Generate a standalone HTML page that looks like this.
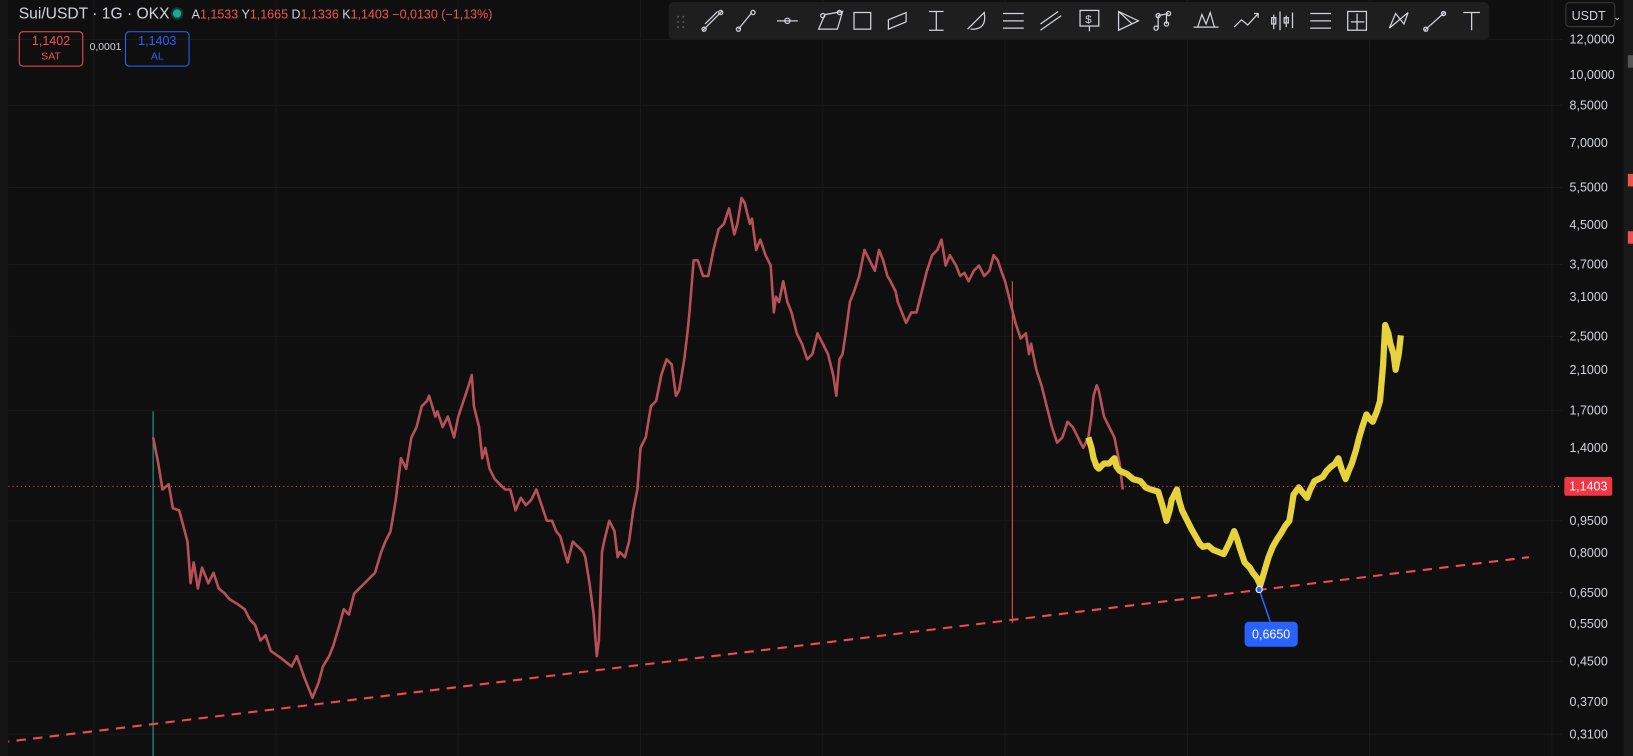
<!DOCTYPE html><html><head><meta charset="utf-8"><style>
body{margin:0;width:1633px;height:756px;background:#0f0f0f;overflow:hidden;font-family:"Liberation Sans",sans-serif;position:relative}
#w{position:absolute;left:0;top:0;width:1568px;height:726px;transform:scale(1.0415);transform-origin:0 0}
.t{position:absolute;white-space:nowrap}
.ax{position:absolute;left:1507px;color:#d1d4dc;font-size:12px}
.tb{position:absolute;left:642px;top:2px;width:788px;height:36px;background:#1e1e1e;border-radius:5px}
.tb svg{position:absolute;top:7px}
</style></head><body><div id="w">
<svg width="1568" height="726" style="position:absolute;left:0;top:0">
<g stroke="#1a1a1a" stroke-width="1">
<path d="M90 0V726M265 0V726M440 0V726M615 0V726M790 0V726M965 0V726M1140 0V726M1315 0V726M1490 0V726"/>
<path d="M0 38H1500M0 101H1500M0 180H1500M0 254H1500M0 323H1500M0 394H1500M0 500H1500M0 569H1500M0 635H1500M0 705H1500"/>
</g>
<line x1="147" y1="395" x2="147" y2="726" stroke="#26a69a" stroke-width="1"/>
<line x1="972" y1="270" x2="972" y2="598" stroke="#ef5350" stroke-width="1"/>
<polyline fill="none" stroke="#b8505a" stroke-width="2.5" stroke-linejoin="round" points="147,420 152,445 156,470 162,465 166,488 172,490 176,505 180,520 183,560 186,540 190,565 194,545 200,560 205,550 210,565 216,570 220,575 228,580 235,585 240,595 245,600 250,615 255,610 260,625 270,632 280,640 285,630 292,650 296,660 300,670 306,655 310,640 316,630 320,620 326,600 330,585 335,590 340,570 345,565 350,560 355,555 360,550 366,530 370,520 375,510 380,480 385,440 390,450 395,420 400,410 405,390 410,385 412,380 418,400 420,395 425,410 430,400 436,420 440,400 445,385 450,370 453,360 455,390 460,410 463,440 466,430 470,450 475,460 480,465 485,470 490,470 495,490 500,478 505,485 510,480 515,470 520,485 525,500 530,500 534,510 538,515 542,530 545,540 550,520 555,525 560,530 562,535 566,560 570,590 573,630 575,615 578,530 580,520 585,500 590,510 593,535 595,530 600,535 604,520 608,490 612,470 615,430 620,420 625,390 630,385 635,360 640,345 645,350 649,380 652,375 657,345 660,320 662,300 666,250 670,250 675,265 680,265 685,240 690,220 695,215 700,200 705,225 708,215 712,190 715,195 720,215 722,210 726,240 730,230 735,245 740,255 743,300 745,285 748,290 752,270 756,290 760,300 765,320 770,330 775,345 780,340 785,320 790,330 795,340 800,360 803,380 806,345 809,340 812,320 816,290 820,280 825,265 830,240 835,250 840,260 844,240 848,250 852,265 855,270 860,280 862,290 866,300 870,310 875,300 880,300 885,280 890,260 895,245 900,240 904,230 908,255 912,245 915,250 918,255 922,265 926,262 930,270 935,260 940,255 945,265 950,260 954,245 958,250 962,262 965,270 970,290 975,310 980,325 985,320 988,340 990,330 995,355 1000,370 1005,390 1010,410 1015,425 1020,420 1025,405 1030,410 1035,420 1040,430 1045,420 1048,400 1050,380 1053,370 1055,375 1058,390 1060,400 1065,410 1070,420 1075,445 1078,470"/>
<polyline fill="none" stroke="#e6d23a" stroke-width="6" stroke-linejoin="round" points="1045,420 1048,430 1050,440 1053,448 1055,450 1060,445 1065,445 1070,440 1072,448 1075,452 1082,455 1088,460 1095,462 1100,468 1105,470 1112,472 1116,485 1120,500 1123,490 1125,480 1130,470 1132,480 1135,490 1140,500 1144,508 1148,515 1152,522 1155,525 1160,524 1165,528 1170,530 1175,532 1180,522 1185,510 1188,518 1190,525 1195,540 1200,545 1203,550 1207,555 1210,562 1213,552 1215,545 1218,535 1222,525 1226,518 1230,512 1234,505 1238,500 1240,488 1242,475 1247,468 1250,472 1255,478 1258,470 1262,462 1266,460 1270,458 1274,452 1278,448 1282,445 1285,440 1288,450 1292,460 1295,452 1298,445 1302,432 1305,420 1308,410 1312,398 1315,402 1318,405 1322,395 1325,385 1328,350 1330,312 1333,320 1335,330 1338,340 1340,355 1343,340 1345,322"/>
<line x1="0" y1="713" x2="1468" y2="535" stroke="#f04a55" stroke-width="2" stroke-dasharray="9,7"/>
<line x1="0" y1="467" x2="1500" y2="467" stroke="#ef5350" stroke-width="1" stroke-dasharray="1,3"/>
<line x1="1209" y1="566" x2="1220" y2="598" stroke="#2962ff" stroke-width="1.5"/>
<circle cx="1209" cy="566" r="3" fill="#2962ff" stroke="#fff" stroke-width="1"/>
<rect x="1500" y="0" width="68" height="726" fill="#0f0f0f"/>
<rect x="1559" y="0" width="9" height="726" fill="#1a1a1a"/>
<rect x="1563" y="53" width="5" height="12" fill="#555"/>
<rect x="1563" y="167" width="5" height="12" fill="#ef5350"/>
<rect x="1563" y="222" width="5" height="12" fill="#ef5350"/>
<rect x="0" y="0" width="8" height="726" fill="#141414"/>
</svg>
<div class="t" style="left:18px;top:5px;font-size:15px;color:#d1d4dc">Sui/USDT · 1G · OKX</div>
<div class="t" style="left:164px;top:7px;width:12px;height:12px;border-radius:6px;background:#0b3b33"><div style="margin:2px;width:8px;height:8px;border-radius:4px;background:#1fa88f"></div></div>
<div class="t" style="left:184px;top:7px;font-size:12px;color:#ef5350"><span style="color:#d1d4dc">A</span>1,1533 <span style="color:#d1d4dc">Y</span>1,1665 <span style="color:#d1d4dc">D</span>1,1336 <span style="color:#d1d4dc">K</span>1,1403 −0,0130 (−1,13%)</div>
<div class="t" style="left:18px;top:30px;width:60px;height:31px;border:1px solid #ef5350;border-radius:4px;color:#ef5350;text-align:center;font-size:12px;line-height:14px;padding-top:1px">1,1402<br><span style="font-size:10px">SAT</span></div>
<div class="t" style="left:86px;top:40px;font-size:10px;color:#d1d4dc">0,0001</div>
<div class="t" style="left:120px;top:30px;width:60px;height:31px;border:1px solid #2962ff;border-radius:4px;color:#2962ff;text-align:center;font-size:12px;line-height:14px;padding-top:1px">1,1403<br><span style="font-size:10px">AL</span></div>
<div class="tb">
<svg width="788" height="22" style="left:0" fill="none" stroke="#d1d4dc" stroke-width="1.2">
<g fill="#555" stroke="none"><circle cx="9" cy="7" r="1"/><circle cx="14" cy="7" r="1"/><circle cx="9" cy="12" r="1"/><circle cx="14" cy="12" r="1"/><circle cx="9" cy="17" r="1"/><circle cx="14" cy="17" r="1"/></g>
<path d="M33 20L51 2M35 14L47 2"/><circle cx="34" cy="19" r="2"/><circle cx="50" cy="3" r="2"/>
<path d="M67 19L80 3"/><circle cx="67" cy="19" r="2"/><circle cx="81" cy="3" r="2"/>
<path d="M104 11H124"/><circle cx="114" cy="11" r="2.5"/>
<path d="M144 19L150 5L167 2L162 19Z"/><circle cx="148" cy="6" r="2"/><circle cx="164" cy="3" r="2"/>
<rect x="178" y="3" width="16" height="16"/>
<path d="M211 19L211 10L228 3L228 12Z"/>
<path d="M250 2H264M257 2V20M250 20H264"/>
<path d="M287 19L303 3Q306 20 290 19"/>
<path d="M321 4H341M321 11H341M321 18H341"/>
<path d="M357 14L374 2M357 20L377 6"/>
<rect x="395" y="1" width="18" height="15"/><text x="400" y="13" font-size="11" fill="#d1d4dc" stroke="none">$</text><path d="M404 16V21"/>
<path d="M432 2V20L451 11ZM432 2L445 14"/>
<circle cx="470" cy="6" r="2"/><circle cx="480" cy="4" r="2"/><circle cx="478" cy="14" r="2"/><circle cx="468" cy="18" r="2"/><path d="M470 6L480 4M470 6V18M478 14V4"/>
<path d="M504 17H528M508 17L512 5L516 14L520 3L524 17"/>
<path d="M543 17L550 10L556 15L566 4M562 4H566V8"/>
<path d="M581 5V19M587 2V20M593 6V17M599 3V18"/><rect x="579" y="8" width="4" height="6"/><rect x="591" y="8" width="4" height="5"/>
<path d="M616 4H636M616 11H636M616 18H636"/>
<rect x="652" y="2" width="18" height="18"/><path d="M661 4V20M655 12H668"/>
<path d="M692 18L698 4L706 14L710 3M692 18L710 3"/>
<path d="M726 20L745 3"/><circle cx="727" cy="19" r="2"/><circle cx="744" cy="4" r="2"/>
<path d="M763 3H779M771 3V20"/>
</svg></div>
<div class="t" style="left:1503px;top:2px;width:48px;height:24px;border:1px solid #3a3a3a;border-radius:4px;color:#d1d4dc;font-size:12px;line-height:24px;padding-left:5px;box-sizing:border-box">USDT <span style="font-size:9px;margin-left:4px">⌄</span></div>
<div class="ax" style="top:31px">12,0000</div>
<div class="ax" style="top:65px">10,0000</div>
<div class="ax" style="top:94px">8,5000</div>
<div class="ax" style="top:130px">7,0000</div>
<div class="ax" style="top:173px">5,5000</div>
<div class="ax" style="top:209px">4,5000</div>
<div class="ax" style="top:247px">3,7000</div>
<div class="ax" style="top:278px">3,1000</div>
<div class="ax" style="top:316px">2,5000</div>
<div class="ax" style="top:348px">2,1000</div>
<div class="ax" style="top:387px">1,7000</div>
<div class="ax" style="top:423px">1,4000</div>
<div class="t" style="left:1502px;top:458px;width:46px;height:18px;background:#f23645;color:#fff;font-size:12px;line-height:18px;text-align:center;border-radius:2px">1,1403</div>
<div class="ax" style="top:493px">0,9500</div>
<div class="ax" style="top:524px">0,8000</div>
<div class="ax" style="top:562px">0,6500</div>
<div class="ax" style="top:592px">0,5500</div>
<div class="ax" style="top:628px">0,4500</div>
<div class="ax" style="top:667px">0,3700</div>
<div class="ax" style="top:698px">0,3100</div>
<div class="t" style="left:1195px;top:597px;width:51px;height:24px;background:#2962ff;color:#fff;font-size:12px;line-height:24px;text-align:center;border-radius:4px">0,6650</div>
</div></body></html>
